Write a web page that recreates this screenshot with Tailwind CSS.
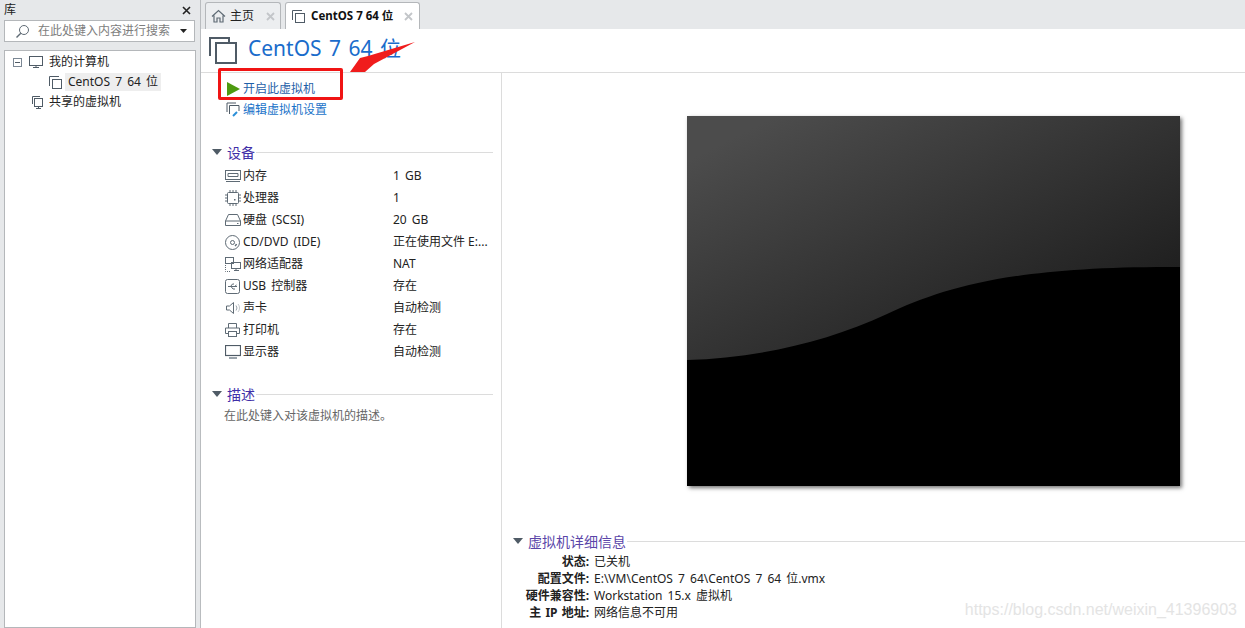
<!DOCTYPE html>
<html lang="zh-CN">
<head>
    <meta charset="UTF-8">
    <title>CentOS 7 64 位 - VMware Workstation</title>
    <script src="https://cdn.jsdelivr.net/npm/@tailwindcss/browser@4"></script>
</head>
<body class="w-[1245px] h-[628px] overflow-hidden bg-white text-[12px] text-[#222] [word-spacing:2px] font-['Noto_Sans','Noto_Sans_CJK_SC',sans-serif]">
<div class="relative flex h-[628px]">

    <!-- 库 -->
    <aside class="w-[201px] shrink-0 flex flex-col bg-[#e6e8ea] border-r border-[#b9bcbf]">
        <div class="h-[20px] flex items-center justify-between pl-[4px] pr-[9px] text-[12px]">
            <span>库</span>
            <svg class="w-[9px] h-[9px]" viewBox="0 0 9 9"><path d="M1 1l7 7M8 1l-7 7" stroke="#222" stroke-width="1.6" fill="none"/></svg>
        </div>
        <div class="ml-[4px] mr-[5px] h-[22px] bg-white border border-[#b4b7ba] flex items-center pl-[10px] pr-[7px]">
            <svg class="w-[15px] h-[15px] shrink-0" viewBox="0 0 15 15" fill="none" stroke="#5f6b75"><circle cx="9" cy="6" r="4.5"/><path d="M5.8 9.2L1.5 13.5" stroke-width="1.4"/></svg>
            <span class="ml-[8px] text-[#7d7d7d]">在此处键入内容进行搜索</span>
            <svg class="ml-auto w-[7px] h-[4px]" viewBox="0 0 7 4"><path d="M0 0h7L3.500 4z" fill="#222"/></svg>
        </div>
        <div class="ml-[4px] mr-[4px] mt-[8px] flex-1 bg-white border border-[#b4b7ba] pt-[1px]">
            <div class="h-[20px] flex items-center">
                <span class="ml-[8px] w-[9px] h-[9px] border border-[#7b8794] flex items-center justify-center"><span class="w-[5px] h-px bg-[#4f5b66]"></span></span>
                <svg class="ml-[6px] w-[16px] h-[14px]" viewBox="0 0 16 14" fill="none" stroke="#4f5b66"><rect x="1.500" y="1.500" width="13" height="9"/><path d="M5 12.500h6M8 11v1.500"/></svg>
                <span class="ml-[5px]">我的计算机</span>
            </div>
            <div class="h-[20px] flex items-center">
                <svg class="ml-[43px] w-[15px] h-[15px]" viewBox="0 0 15 15" fill="none" stroke="#4f5b66"><path d="M1.500 11V1.500H11"/><rect x="4.500" y="4.500" width="9" height="9"/></svg>
                <span class="ml-[2px] px-[3px] h-[18px] flex items-center bg-[#eeeeee]">CentOS 7 64 位</span>
            </div>
            <div class="h-[20px] flex items-center">
                <svg class="ml-[26px] w-[14px] h-[15px]" viewBox="0 0 14 15" fill="none" stroke="#4f5b66"><path d="M1.500 9V1.500H9"/><rect x="3.500" y="3.500" width="8" height="8"/><path d="M5 13.500h5M7.500 11.500v2"/></svg>
                <span class="ml-[4px]">共享的虚拟机</span>
            </div>
        </div>
    </aside>

    <main class="flex-1 flex flex-col min-w-0">
        <!-- 标签 -->
        <div class="h-[29px] shrink-0 bg-[#e6e8ea] flex items-end pl-[4px] gap-[4px]">
            <div class="w-[76px] h-[27px] bg-[#eceef0] border border-b-0 border-[#b4b7ba] rounded-t-[3px] flex items-center pl-[5px]">
                <svg class="w-[15px] h-[14px]" viewBox="0 0 15 14" fill="none" stroke="#5f6b75"><path d="M1 7.500L7.500 1.500 14 7.500M3 6.500v6.500h3V9h3v4h3V6.500" stroke-width="1.200"/></svg>
                <span class="ml-[4px]">主页</span>
                <svg class="ml-auto mr-[5px] w-[9px] h-[9px]" viewBox="0 0 9 9"><path d="M1 1l7 7M8 1l-7 7" stroke="#c3c6c9" stroke-width="1.800"/></svg>
            </div>
            <div class="w-[135px] h-[27px] bg-white border border-b-0 border-[#b4b7ba] rounded-t-[3px] flex items-center pl-[5px]">
                <svg class="w-[15px] h-[15px]" viewBox="0 0 15 15" fill="none" stroke="#4f5b66"><path d="M1.500 11V1.500H11"/><rect x="4.500" y="4.500" width="9" height="9"/></svg>
                <span class="ml-[5px] font-bold text-[11.500px] text-[#111] [word-spacing:0]">CentOS 7 64 位</span>
                <svg class="ml-auto mr-[6px] w-[9px] h-[9px]" viewBox="0 0 9 9"><path d="M1 1l7 7M8 1l-7 7" stroke="#c3c6c9" stroke-width="1.800"/></svg>
            </div>
        </div>

        <!-- 标题 -->
        <div class="h-[44px] shrink-0 border-b border-[#dcdcdc] flex items-center pl-[7px]">
            <svg class="w-[29px] h-[29px]" viewBox="0 0 29 29" fill="none" stroke="#4f5b66" stroke-width="2"><path d="M2 20V2H21V7"/><rect x="8" y="7" width="20" height="20"/></svg>
            <h1 class="ml-[11px] pb-[4px] text-[21px] leading-none text-[#1a6ccb]">CentOS 7 64 位</h1>
        </div>

        <div class="flex-1 flex min-h-0">
            <!-- 左侧信息 -->
            <section class="w-[301px] shrink-0 border-r border-[#dcdcdc] pt-[5px]">
                <div class="h-[21px] flex items-center pl-[26px] text-[#1f5fa8]">
                    <svg class="w-[13px] h-[14px]" viewBox="0 0 13 14"><path d="M0 0L13 7 0 14z" fill="#4d9a10"/></svg>
                    <span class="ml-[3px]">开启此虚拟机</span>
                </div>
                <div class="h-[21px] flex items-center pl-[25px] text-[#1a73c9]">
                    <svg class="w-[15px] h-[15px]" viewBox="0 0 15 15" fill="none" stroke="#4f5b66"><path d="M1 10V1h9"/><path d="M3.500 12V3.500H13V9"/><path d="M7 14l4-4" stroke="#2a8fd8" stroke-width="2"/></svg>
                    <span class="ml-[2px]">编辑虚拟机设置</span>
                </div>

                <div class="mt-[22px] h-[20px] flex items-center pl-[11px] pr-[8px]">
                    <svg class="w-[10px] h-[6px]" viewBox="0 0 10 6"><path d="M0 0h10L5 6z" fill="#4f5b66"/></svg>
                    <span class="ml-[5px] text-[14px] text-[#3f2fa8]">设备</span>
                    <span class="ml-[1px] flex-1 h-px bg-[#dcdcdc]"></span>
                </div>
                <div class="mt-[3px]">
                    <div class="h-[22px] flex items-center pl-[24px]">
                        <svg class="w-[16px] h-[12px] shrink-0" viewBox="0 0 16 12" fill="none" stroke="#5f6b75"><rect x=".5" y=".5" width="15" height="9"/><path d="M3 3.500h10v3H3zM1 11.500h14"/></svg>
                        <span class="ml-[2px] w-[150px]">内存</span><span>1 GB</span>
                    </div>
                    <div class="h-[22px] flex items-center pl-[24px]">
                        <svg class="w-[16px] h-[16px] shrink-0" viewBox="0 0 16 16" fill="none" stroke="#5f6b75"><rect x="2.500" y="2.500" width="11" height="11" rx="1"/><path d="M0 5h2M0 8h2M0 11h2M14 5h2M14 8h2M14 11h2M5 0v2M8 0v2M11 0v2M5 14v2M8 14v2M11 14v2"/><rect x="9" y="9" width="1.500" height="1.500" fill="#5f6b75" stroke="none"/></svg>
                        <span class="ml-[2px] w-[150px]">处理器</span><span>1</span>
                    </div>
                    <div class="h-[22px] flex items-center pl-[24px]">
                        <svg class="w-[16px] h-[12px] shrink-0" viewBox="0 0 16 12" fill="none" stroke="#5f6b75"><path d="M3.500 .5h9l3 6.500v4.500H.5V7zM.5 7h15M12 9.500h1.500"/></svg>
                        <span class="ml-[2px] w-[150px]">硬盘 (SCSI)</span><span>20 GB</span>
                    </div>
                    <div class="h-[22px] flex items-center pl-[24px]">
                        <svg class="w-[15px] h-[15px] shrink-0 mr-[1px]" viewBox="0 0 15 15" fill="none" stroke="#5f6b75"><circle cx="7.500" cy="7.500" r="7"/><circle cx="7.500" cy="7.500" r="2"/><path d="M10 11a4.500 4.500 0 0 0 1.500-2" stroke-width="1.500"/></svg>
                        <span class="ml-[2px] w-[150px]">CD/DVD (IDE)</span><span class="[word-spacing:0]">正在使用文件 E:...</span>
                    </div>
                    <div class="h-[22px] flex items-center pl-[24px]">
                        <svg class="w-[16px] h-[15px] shrink-0" viewBox="0 0 16 15" fill="none" stroke="#5f6b75"><rect x=".5" y=".5" width="8" height="6"/><rect x="6.500" y="5.500" width="9" height="6"/><path d="M9 13.500h5M11 11.500v2"/><path d="M.5 8v6.500H6" stroke-dasharray="1 1"/></svg>
                        <span class="ml-[2px] w-[150px]">网络适配器</span><span>NAT</span>
                    </div>
                    <div class="h-[22px] flex items-center pl-[24px]">
                        <svg class="w-[15px] h-[15px] shrink-0 mr-[1px]" viewBox="0 0 15 15" fill="none" stroke="#5f6b75"><rect x=".5" y=".5" width="14" height="14" rx="2"/><path d="M3 7.500h9M9.500 7.500l2-1.500M6 7.500l2 2.500h2M5.500 7.500l2-2.500h1.500"/></svg>
                        <span class="ml-[2px] w-[150px]">USB 控制器</span><span>存在</span>
                    </div>
                    <div class="h-[22px] flex items-center pl-[24px]">
                        <svg class="w-[14px] h-[14px] shrink-0 ml-[1px] mr-[1px]" viewBox="0 0 14 14" fill="none" stroke="#5f6b75"><path d="M.5 5h3L7.500 1.500v11L3.500 9h-3z"/><path d="M10 4.500a4 4 0 0 1 0 5" stroke="#9aa3ab"/><path d="M12 3a6 6 0 0 1 0 8" stroke="#c3c7cb"/></svg>
                        <span class="ml-[2px] w-[150px]">声卡</span><span>自动检测</span>
                    </div>
                    <div class="h-[22px] flex items-center pl-[24px]">
                        <svg class="w-[15px] h-[14px] shrink-0 mr-[1px]" viewBox="0 0 15 14" fill="none" stroke="#5f6b75"><path d="M3.500 5V.5h8V5"/><path d="M3 10.500H.5V5h14v5.500H12"/><rect x="3.500" y="8.500" width="8" height="5"/></svg>
                        <span class="ml-[2px] w-[150px]">打印机</span><span>存在</span>
                    </div>
                    <div class="h-[22px] flex items-center pl-[24px]">
                        <svg class="w-[16px] h-[14px] shrink-0" viewBox="0 0 16 14" fill="none" stroke="#4f5b66"><rect x=".5" y=".5" width="15" height="10" stroke-width="1.200"/><path d="M4 13h8" stroke="#9aa3ab" stroke-width="2"/></svg>
                        <span class="ml-[2px] w-[150px]">显示器</span><span>自动检测</span>
                    </div>
                </div>

                <div class="mt-[21px] h-[20px] flex items-center pl-[11px] pr-[8px]">
                    <svg class="w-[10px] h-[6px]" viewBox="0 0 10 6"><path d="M0 0h10L5 6z" fill="#4f5b66"/></svg>
                    <span class="ml-[5px] text-[14px] text-[#3f2fa8]">描述</span>
                    <span class="ml-[1px] flex-1 h-px bg-[#dcdcdc]"></span>
                </div>
                <p class="pl-[23px] mt-[2px] leading-[19px] text-[#666]">在此处键入对该虚拟机的描述。</p>
            </section>

            <!-- 预览和详细信息 -->
            <section class="flex-1 min-w-0 flex flex-col">
                <div class="ml-[185px] mt-[43px] w-[493px] h-[370px] shadow-[2px_2px_4px_rgba(0,0,0,0.55)]">
                    <svg class="block w-[493px] h-[370px]" viewBox="0 0 493 370">
                        <defs>
                            <linearGradient id="shine" gradientUnits="userSpaceOnUse" x1="18" y1="36" x2="180" y2="356">
                                <stop offset="0" stop-color="#4c4c4c"/>
                                <stop offset="1" stop-color="#1a1a1a"/>
                            </linearGradient>
                        </defs>
                        <rect width="493" height="370" fill="#000"/>
                        <path d="M0 0H493V151C330 150 260 170 200 198C140 226 70 242 0 244z" fill="url(#shine)"/>
                    </svg>
                </div>
                <div class="mt-[45px] h-[20px] flex items-center pl-[11px]">
                    <svg class="w-[10px] h-[6px]" viewBox="0 0 10 6"><path d="M0 0h10L5 6z" fill="#4f5b66"/></svg>
                    <span class="ml-[5px] text-[14px] text-[#5a45a8]">虚拟机详细信息</span>
                    <span class="ml-[1px] flex-1 h-px bg-[#dcdcdc]"></span>
                </div>
                <dl class="grid grid-cols-[87px_1fr] gap-x-[5px] leading-[17px] mt-[2px]">
                    <dt class="text-right font-bold">状态:</dt><dd>已关机</dd>
                    <dt class="text-right font-bold">配置文件:</dt><dd>E:\VM\CentOS 7 64\CentOS 7 64 位.vmx</dd>
                    <dt class="text-right font-bold">硬件兼容性:</dt><dd>Workstation 15.x 虚拟机</dd>
                    <dt class="text-right font-bold [word-spacing:1px]">主 IP 地址:</dt><dd>网络信息不可用</dd>
                </dl>
            </section>
        </div>
    </main>

    <!-- 水印 -->
    <span class="absolute right-[8px] top-[600px] text-[16px] leading-[20px] text-[#e4e4e4] font-['Liberation_Sans',sans-serif]">https://blog.csdn.net/weixin_41396903</span>

    <!-- 红色标注 -->
    <div class="absolute left-[218px] top-[68px] w-[125px] h-[32px] border-[3px] border-[#f01414] rounded-[2px]"></div>
    <svg class="absolute left-[345px] top-[38px] w-[72px] h-[36px]" viewBox="0 0 72 36"><path d="M70 4L23 18 15 20 5 34 20 34 29 26z" fill="#f01c1c"/></svg>
</div>
</body>
</html>
